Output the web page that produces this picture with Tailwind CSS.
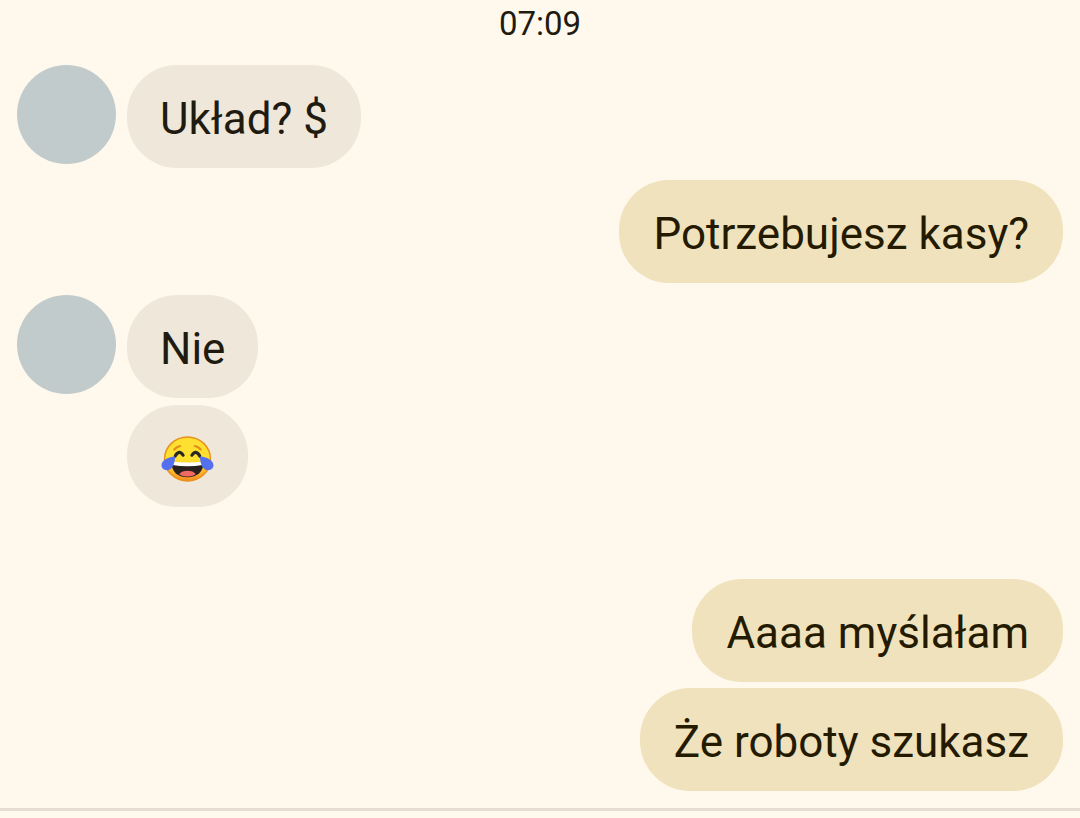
<!DOCTYPE html>
<html lang="pl">
<head>
    <meta charset="UTF-8">
    <meta name="viewport" content="width=device-width, initial-scale=1.0">
    <title>Chat</title>
    <script src="https://cdn.jsdelivr.net/npm/@tailwindcss/browser@4"></script>
</head>
<body class="bg-[#fff8ec] font-[Roboto,sans-serif] text-[#1f1b10] overflow-x-hidden">
    <main>
        <div class="px-[17px] pt-1 pb-[17px]">
            <time class="block text-center text-[33px] leading-[40px] mb-[21px]" datetime="07:09">07:09</time>

            <div class="flex flex-col gap-3">
                <div class="flex items-start gap-[11px]">
                    <div class="size-[99px] shrink-0 rounded-full bg-[#c2cbcc]"></div>
                    <p class="rounded-[50px] bg-[#eee7da] px-[33px] pt-7 pb-[23px] text-[44px] leading-[52px]">Układ? $</p>
                </div>

                <div class="flex justify-end">
                    <p class="rounded-[50px] bg-[#efe2bc] px-[34px] pt-7 pb-[23px] text-[44px] leading-[52px] text-[#241a00]">Potrzebujesz kasy?</p>
                </div>

                <div class="flex items-start gap-[11px]">
                    <div class="size-[99px] shrink-0 rounded-full bg-[#c2cbcc]"></div>
                    <div class="flex flex-col items-start gap-[7px]">
                        <p class="rounded-[50px] bg-[#eee7da] px-[33px] pt-7 pb-[23px] text-[44px] leading-[52px]">Nie</p>
                        <div class="rounded-[50px] bg-[#eee7da] px-[34px] pt-7 pb-[23px]">
                            <!-- tears of joy -->
                            <svg class="h-[51px] w-[53px]" viewBox="0 0 54 52" role="img" aria-label="Łzy radości">
                                <defs>
                                    <linearGradient id="face" x1="0" y1="0" x2="0" y2="1">
                                        <stop offset="0.5" stop-color="#fde030"/>
                                        <stop offset="0.8" stop-color="#fbb52c"/>
                                        <stop offset="1" stop-color="#f58a22"/>
                                    </linearGradient>
                                </defs>
                                <ellipse cx="27" cy="26.500" rx="23.400" ry="22.500" fill="url(#face)" stroke="#e8911f" stroke-width="1.500"/>
                                <path d="M13.500 16.800q2.500-2.700 6-3.500M34.500 13.300q3.500.8 6 3.500" fill="none" stroke="#e38d1c" stroke-width="2.200" stroke-linecap="round"/>
                                <path d="M14.500 23.500q4-7 8-.8M31.500 22.700q4-6.200 8 .8" fill="none" stroke="#2b2823" stroke-width="3.200" stroke-linecap="round"/>
                                <path d="M10.500 29.500q16.500 2.500 33 0C43 40 37 45 27 45S11 40 10.500 29.500z" fill="#28201f"/>
                                <path d="M10.500 29q16.500 2.200 33 0l-1 3.500q-15.500 3-31 0z" fill="#fff"/>
                                <path d="M18.500 42c3-4.700 14-4.700 17 0-4.500 3.200-12.500 3.200-17 0z" fill="#ef6a60"/>
                                <path d="M14.300 24C8 24.500.5 27.500.5 33c0 4.800 6 6.500 9.500 3.500 3-2.500 4.300-8 4.300-12.500zM39.700 24c6.300.5 13.800 3.500 13.800 9 0 4.800-6 6.500-9.500 3.500-3-2.500-4.300-8-4.300-12.500z" fill="#5470ed"/>
                            </svg>
                        </div>
                    </div>
                </div>
            </div>

            <div class="mt-[72px] flex flex-col items-end gap-[6px] text-[#241a00]">
                <p class="rounded-[50px] bg-[#efe2bc] px-[34px] pt-7 pb-[23px] text-[44px] leading-[52px]">Aaaa myślałam</p>
                <p class="rounded-[50px] bg-[#efe2bc] px-[34px] pt-7 pb-[23px] text-[44px] leading-[52px]">Że roboty szukasz</p>
            </div>
        </div>
        <hr class="border-0 h-[3px] bg-[#e6ddd0]">
    </main>
</body>
</html>
